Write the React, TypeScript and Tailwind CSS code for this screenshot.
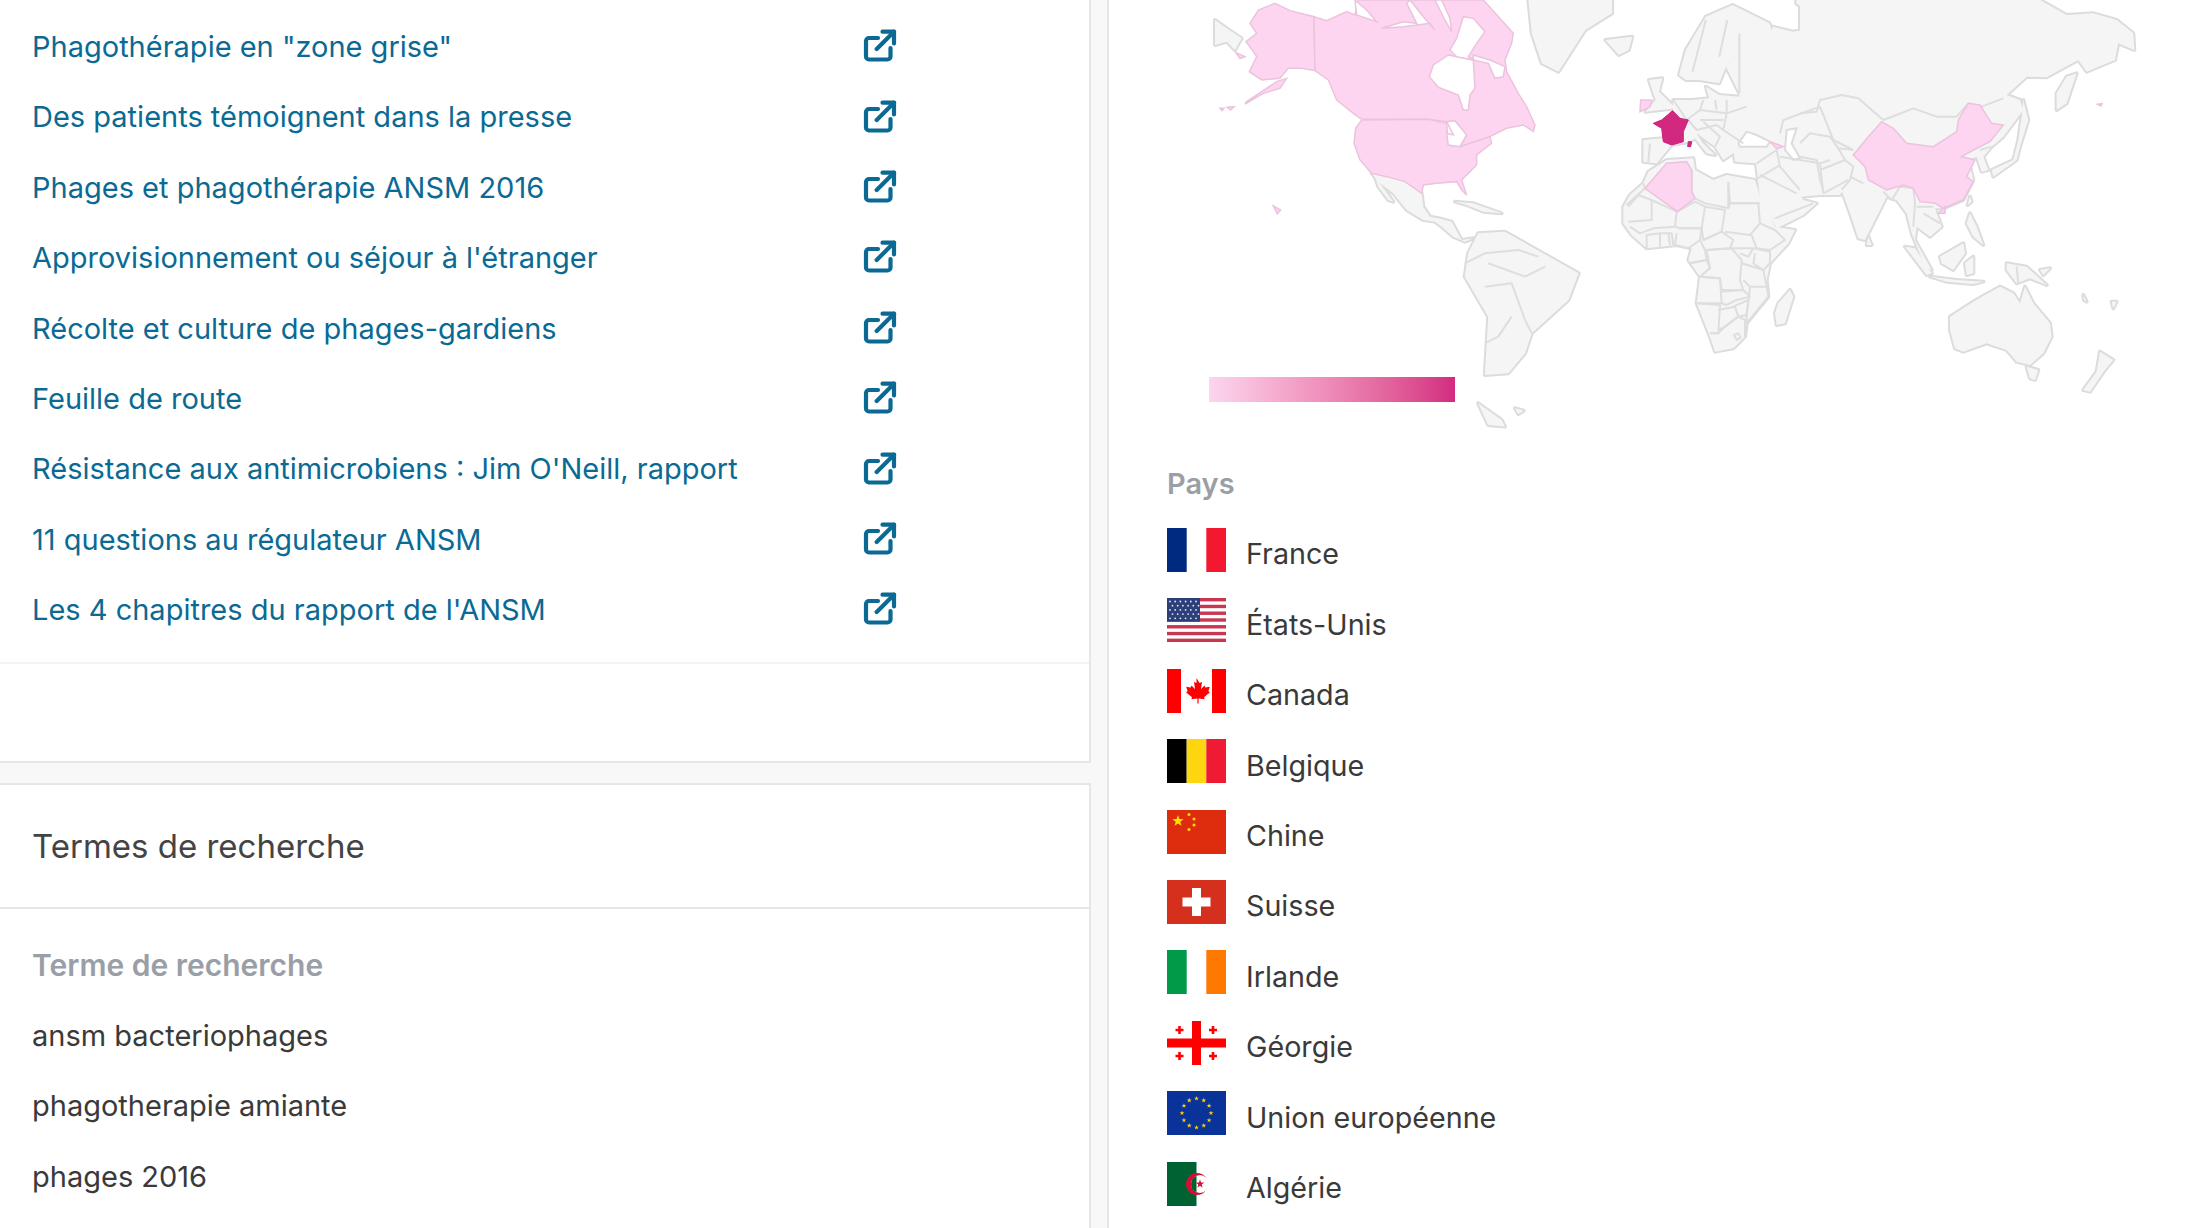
import React from 'react';

const links = [
  'Phagothérapie en "zone grise"',
  'Des patients témoignent dans la presse',
  'Phages et phagothérapie ANSM 2016',
  "Approvisionnement ou séjour à l'étranger",
  'Récolte et culture de phages-gardiens',
  'Feuille de route',
  "Résistance aux antimicrobiens : Jim O'Neill, rapport",
  '11 questions au régulateur ANSM',
  "Les 4 chapitres du rapport de l'ANSM",
];

const terms = ['ansm bacteriophages', 'phagotherapie amiante', 'phages 2016'];

const LinkIcon = () => (
  <svg viewBox="0 0 34 34" className="h-[34px] w-[34px] shrink-0" fill="none" stroke="#0b6a93" strokeWidth="4.2" strokeLinecap="round" strokeLinejoin="round">
    <path d="M15 9H6a3 3 0 0 0-3 3V27.5a3 3 0 0 0 3 3H24.5a3 3 0 0 0 3-3V19" />
    <path d="M19.5 2.7H31V14.5" />
    <path d="M31 2.7 13.7 20" />
  </svg>
);

// The map shapes were traced from crops at different scales, so each group has its own transform
const Z3 = 'translate(1150 0) scale(0.6697 0.3333)';
const Z9 = 'translate(1190 0) scale(0.3333)';
const Z10 = 'translate(1600 100) scale(0.3333)';
const Z11 = 'translate(1800 0) scale(0.3333)';

const land: [string, string][] = [
  [Z3, 'M565 0 L690 0 L690 40 L650 90 L610 215 L585 190 L570 100Z'],
  [Z3, 'M680 120 L720 110 L715 150 L700 165Z'],
  [Z3, 'M790 225 L800 150 L830 50 L870 15 L925 70 L930 105 L885 150 L860 200 L850 250 L820 240 L800 240Z'],
  [Z3, 'M860 200 L885 150 L880 100 L925 110 L930 80 L960 95 L1010 80 L965 10 L965 0 L1300 0 L1250 250 L1000 400 L880 400 L880 280Z'],
  [Z3, 'M800 320 L810 300 L835 295 L830 260 L850 285 L880 290 L890 250 L960 320 L960 330Z'],
  [Z3, 'M745 240 L765 235 L760 275 L785 325 L740 335 L755 300Z'],
  [Z3, 'M490 700 L530 695 L565 735 L640 820 L625 900 L570 1000 L560 1060 L535 1120 L500 1125 L505 950 L470 830 L475 760Z'],
  [Z3, 'M490 1210 L525 1260 L530 1280 L505 1275Z'],
  [Z3, 'M545 1225 L558 1232 L550 1242Z'],
  [Z9, 'M75 60 L110 85 L155 115 L135 150 L110 125 L75 135Z'],
  [Z9, 'M545 520 L590 530 L645 545 L695 580 L700 620 L720 650 L745 655 L785 665 L815 720 L850 715 L825 725 L790 710 L755 680 L735 665 L700 660 L650 630 L610 580 L570 550Z'],
  [Z9, 'M555 530 L610 605 L595 600 L565 560Z'],
  [Z9, 'M795 605 L850 610 L935 640 L880 635 L830 615Z'],
  [Z10, 'M70 320 L90 285 L130 250 L145 215 L200 180 L280 175 L285 210 L340 240 L380 225 L465 240 L480 290 L525 380 L585 390 L565 430 L510 490 L500 540 L505 590 L440 670 L435 710 L400 745 L345 755 L330 710 L290 610 L300 530 L265 480 L275 445 L230 435 L140 445 L95 405 L70 370Z'],
  [Z10, 'M570 570 L580 590 L555 670 L530 675 L525 640 L535 610Z'],
  [Z10, 'M130 120 L190 115 L218 32 L220 0 L445 0 L445 130 L400 160 L370 180 L345 140 L290 100 L305 125 L345 165 L320 160 L285 115 L270 125 L215 135 L170 190 L130 185Z'],
  [Z10, 'M400 150 L420 135 L445 0 L900 0 L900 270 L800 260 L745 250 L720 285 L660 285 L600 290 L590 270 L610 300 L650 310 L610 345 L530 385 L480 300 L473 230 L468 190 L405 185Z'],
  [Z11, 'M0 0 L720 0 L800 45 L880 40 L950 60 L1000 100 L1003 150 L955 130 L945 180 L860 215 L835 180 L770 215 L740 232 L680 230 L620 285 L660 300 L670 330 L610 410 L575 440 L550 470 L565 510 L545 515 L530 470 L505 480 L520 540 L490 600 L430 625 L405 625 L425 680 L390 710 L350 680 L345 720 L395 810 L375 800 L335 700 L320 640 L290 600 L260 590 L205 700 L195 720 L175 715 L150 640 L125 570 L60 560 L0 590Z'],
  [Z11, 'M450 950 L520 905 L555 885 L600 860 L640 880 L660 910 L675 860 L700 910 L750 970 L755 1010 L730 1060 L690 1095 L650 1085 L620 1050 L560 1030 L490 1055 L465 1045 L450 990Z'],
  [Z11, 'M680 1100 L715 1110 L705 1140 L690 1135Z'],
  [Z11, 'M900 1055 L940 1080 L915 1110 L870 1175 L850 1170 L890 1115Z'],
  [Z11, 'M670 300 L685 360 L660 440 L650 480 L580 530 L575 510 L640 480 L655 420 L665 350Z'],
  [Z11, 'M830 220 L800 310 L770 330 L770 280 L800 230Z'],
  [Z11, 'M510 590 L515 605 L503 615Z'],
  [Z11, 'M510 640 L530 680 L550 735 L520 710 L500 670Z'],
  [Z11, 'M420 770 L490 730 L495 760 L460 810 L425 790Z'],
  [Z11, 'M315 740 L345 745 L395 820 L380 825Z'],
  [Z11, 'M390 830 L470 840 L550 845 L520 852 L440 845Z'],
  [Z11, 'M495 790 L520 770 L520 820 L500 825Z'],
  [Z11, 'M620 790 L680 800 L740 855 L690 835 L650 850 L620 810Z'],
  [Z11, 'M720 810 L750 805 L730 825Z'],
  [Z11, 'M205 710 L215 735 L200 735Z'],
  [Z11, 'M850 885 L860 905 L852 900Z'],
  [Z11, 'M935 905 L950 905 L940 925Z'],
];

const seas: [string, string][] = [
  [Z10, 'M415 130 L440 95 L470 105 L510 125 L500 140 L420 140Z'],
  [Z10, 'M560 90 L590 85 L575 130 L600 175 L580 180 L555 150Z'],
];

const borders: [string, string][] = [
  [Z3, 'M830 60 L810 215'],
  [Z3, 'M862 60 L850 170'],
  [Z3, 'M880 100 L880 280'],
  [Z10, 'M130 250 L135 265 L80 315'],
  [Z10, 'M85 320 L115 285 L155 300 L155 360 L85 365'],
  [Z10, 'M155 300 L230 335 L225 380 L160 385 L120 400 L90 380'],
  [Z10, 'M232 335 L285 305 L315 320 L305 385 L240 385 L225 380'],
  [Z10, 'M275 210 L275 275 L285 295 L315 310 L385 325 L385 245'],
  [Z10, 'M385 250 L390 310 L480 310'],
  [Z10, 'M315 320 L375 330 L365 395 L310 420 L305 385'],
  [Z10, 'M385 325 L390 310 L475 310 L480 370 L450 405 L375 395'],
  [Z10, 'M480 370 L525 390 L555 420 L510 450 L470 445 L455 405'],
  [Z10, 'M240 385 L305 385 L300 420 L265 445 L225 435 L230 400'],
  [Z10, 'M140 445 L140 405 L180 400 L215 400 L220 435 M180 400 L180 440 M205 400 L210 435'],
  [Z10, 'M310 420 L365 395 L400 420 L390 445 L320 450'],
  [Z10, 'M320 450 L395 445 L425 480 L420 540 L430 570 L365 570 L360 535 L300 530 L330 505Z'],
  [Z10, 'M270 490 L320 480 L330 505 L300 530'],
  [Z10, 'M300 420 L315 450 L320 480 L270 490'],
  [Z10, 'M390 445 L460 445 L445 470 L420 460'],
  [Z10, 'M460 445 L510 455 L510 490 L490 510 L460 490 L465 460'],
  [Z10, 'M425 490 L490 510 L500 560 L450 560 L430 540'],
  [Z10, 'M300 530 L360 535 L365 610 L290 610'],
  [Z10, 'M365 575 L430 570 L450 590 L410 600 L380 615 L365 610'],
  [Z10, 'M500 560 L505 590 L440 670 L440 640 L445 610 L450 560'],
  [Z10, 'M290 610 L360 615 L355 700 L330 700'],
  [Z10, 'M355 630 L405 620 L415 650 L375 680 L355 690'],
  [Z10, 'M400 620 L445 600 L440 645 L415 650'],
  [Z10, 'M330 700 L355 700 L375 680 L415 650 L435 660 L435 710'],
  [Z10, 'M402 705 L415 700 L422 712 L410 720Z'],
  [Z10, 'M470 190 L530 150 L540 200 L600 270'],
  [Z10, 'M465 240 L540 195 M480 225 L590 280'],
  [Z10, 'M525 355 L640 310'],
  [Z10, 'M540 170 L660 190 L670 280'],
  [Z10, 'M660 190 L690 180 M670 280 L745 240'],
  [Z10, 'M540 100 L550 60 L660 20'],
  [Z10, 'M660 20 L700 120 L760 150'],
  [Z10, 'M750 230 L790 250'],
  [Z10, 'M220 0 L260 60 L300 30 L380 40 L440 20'],
  [Z10, 'M300 30 L310 0 M380 0 L380 40 L370 90 L430 130'],
  [Z10, 'M265 60 L290 90 L350 75 L370 90'],
  [Z10, 'M310 65 L360 110 L345 140'],
  [Z10, 'M300 60 L370 60 M345 0 L350 30'],
  [Z10, 'M150 130 L145 185'],
  [Z11, 'M0 340 L50 335 L60 300 L125 285 L175 295 L250 360 L290 345 L340 325 L410 350 L470 350 L505 310 L545 320 L610 295'],
  [Z11, 'M0 430 L30 400 L90 410 L115 445 L160 450'],
  [Z11, 'M0 470 L50 480 L60 540 L70 570'],
  [Z11, 'M60 510 L135 480 L160 500 L150 540 L125 570'],
  [Z11, 'M115 445 L135 480'],
  [Z11, 'M250 575 L275 600 L300 560 L340 565 L345 610 L340 680'],
  [Z11, 'M350 620 L400 620 M370 640 L420 670'],
  [Z11, 'M540 450 L575 440 M650 800 L655 850'],
  [Z3, 'M505 790 L560 830 L590 800 M500 860 L540 850 L560 960 M540 950 L520 1010 L500 1030 M560 960 L570 1000 M470 790 L500 760 L550 750 L580 770'],
];

const pink: [string, string][] = [
  [Z9, 'M180 70 L205 30 L255 10 L300 32 L372 50 L375 212 L335 205 L295 205 L270 235 L215 240 L178 215 L200 170 L190 155 L168 125 L200 100Z'],
  [Z9, 'M290 235 L270 265 L220 280 L165 312 L170 305 L215 275 L260 245Z'],
  [Z9, 'M372 50 L410 62 L470 35 L495 45 L505 0 L880 0 L970 100 L965 130 L945 180 L950 215 L985 280 L1010 320 L1035 375 L1030 395 L1000 375 L950 385 L900 410 L810 440 L830 405 L790 385 L770 365 L715 358 L515 358 L490 340 L440 300 L415 240 L375 212Z'],
  [Z9, 'M515 360 L715 358 L770 370 L775 435 L810 440 L900 410 L905 430 L860 465 L860 495 L815 540 L830 585 L815 570 L800 545 L740 550 L700 555 L695 580 L645 545 L590 530 L545 520 L510 480 L492 430 L497 385Z'],
  [Z9, 'M250 618 L272 630 L262 642Z'],
  [Z9, 'M138 158 L165 170 L150 176Z'],
  [Z9, 'M90 325 L102 325 L96 332Z'],
  [Z9, 'M112 322 L132 320 L122 330Z'],
  [Z10, 'M135 265 L200 190 L260 185 L275 210 L275 275 L285 295 L232 335Z'],
  [Z10, 'M510 125 L550 140 L530 146Z'],
  [Z10, 'M122 0 L155 0 L150 20 L120 35Z'],
  [Z11, 'M160 465 L205 410 L245 365 L280 385 L320 430 L400 440 L470 395 L475 360 L505 310 L540 315 L575 370 L610 375 L570 425 L520 450 L485 470 L525 480 L500 530 L520 545 L490 600 L430 625 L405 610 L360 605 L340 565 L310 555 L260 570 L205 540 L195 500Z'],
  [Z11, 'M415 640 L435 620 L435 640Z'],
  [Z11, 'M893 313 L906 311 L903 318Z'],
];

// Hudson Bay and the arctic channels, cut out of the Canada shape
const pinkSeas: [string, string][] = [
  [Z9, 'M718 230 L730 195 L775 165 L800 170 L850 180 L855 265 L840 285 L835 330 L820 330 L805 285 L745 262Z'],
  [Z9, 'M800 115 L820 50 L850 55 L885 95 L860 130 L835 170 L850 180 L800 170 L780 150Z'],
  [Z9, 'M850 165 L900 180 L945 200 L940 230 L915 235 L895 190 L850 180Z'],
  [Z9, 'M575 85 L640 65 L680 70 L650 10 L660 0 L680 25 L700 50 L735 90 L720 70 L640 80Z'],
  [Z9, 'M495 0 L530 30 L560 65 L500 45Z'],
  [Z9, 'M735 0 L755 0 L780 55 L785 95 L765 60Z'],
  [Z9, 'M770 365 L795 362 L830 405 L810 440 L775 435 L770 400 L790 405Z'],
];

const france: [string, string][] = [
  [Z10, 'M160 70 L185 60 L218 32 L240 55 L265 60 L250 95 L250 125 L215 135 L190 125 L185 85Z'],
  [Z10, 'M265 125 L275 125 L272 140 L263 140Z'],
];

const WorldMap = () => (
  <svg viewBox="1109 0 1091 440" className="block h-[440px] w-[1091px]" fill="none">
    {land.map(([t, d], i) => (
      <path key={i} d={d} transform={t} stroke="#dcdcdc" strokeWidth="4" strokeLinejoin="round" vectorEffect="non-scaling-stroke" />
    ))}
    {land.map(([t, d], i) => (
      <path key={i} d={d} transform={t} fill="#f5f5f5" />
    ))}
    {seas.map(([t, d], i) => (
      <path key={i} d={d} transform={t} fill="#ffffff" stroke="#dcdcdc" strokeWidth="2" vectorEffect="non-scaling-stroke" />
    ))}
    {borders.map(([t, d], i) => (
      <path key={i} d={d} transform={t} stroke="#dedede" strokeWidth="2" strokeLinejoin="round" vectorEffect="non-scaling-stroke" />
    ))}
    {pink.map(([t, d], i) => (
      <path key={i} d={d} transform={t} fill="#fdd5f0" stroke="#ecc3dc" strokeWidth="1.5" vectorEffect="non-scaling-stroke" />
    ))}
    {pinkSeas.map(([t, d], i) => (
      <path key={i} d={d} transform={t} fill="#ffffff" stroke="#ecc3dc" strokeWidth="1.5" vectorEffect="non-scaling-stroke" />
    ))}
    {france.map(([t, d], i) => (
      <path key={i} d={d} transform={t} fill="#d3287f" stroke="#cc2279" strokeWidth="1" vectorEffect="non-scaling-stroke" />
    ))}
  </svg>
);

const star = (cx: number, cy: number, r: number) => {
  const pts: string[] = [];
  for (let i = 0; i < 10; i++) {
    const a = (Math.PI / 5) * i - Math.PI / 2;
    const rad = i % 2 === 0 ? r : r * 0.4;
    pts.push(`${cx + rad * Math.cos(a)},${cy + rad * Math.sin(a)}`);
  }
  return pts.join(' ');
};

const Fr = () => (
  <>
    <rect width="19.7" height="44" fill="#002a7f" />
    <rect x="39.3" width="19.7" height="44" fill="#f31830" />
  </>
);

const Us = () => (
  <>
    <rect width="59" height="44" fill="#ffffff" />
    {[0, 2, 4, 6, 8, 10, 12].map((i) => (
      <rect key={i} y={i * 3.385} width="59" height="3.385" fill="#c8374f" />
    ))}
    <rect width="33" height="23.7" fill="#2d3f78" />
    {[0, 1, 2, 3, 4].map((r) =>
      [0, 1, 2, 3, 4, 5].map((c) => (
        <circle key={`${r}-${c}`} cx={3 + c * 5.2 + (r % 2) * 2.5} cy={3.5 + r * 4.2} r="0.9" fill="#e4e8f2" />
      ))
    )}
  </>
);

const Ca = () => (
  <>
    <rect width="14" height="44" fill="#ff0000" />
    <rect x="45" width="14" height="44" fill="#ff0000" />
    <path
      d="M29.5 9l3 5 2.5-1-1 7 3.5-3.5.8 2 4.5-.7-1.4 4.5 1.6 1-6 5 .6 2-6-.8v5h-1.2v-5l-6 .8.6-2-6-5 1.6-1-1.4-4.5 4.5.7.8-2 3.5 3.5-1-7 2.5 1z"
      fill="#ff0000"
    />
  </>
);

const Be = () => (
  <>
    <rect width="19.7" height="44" fill="#000000" />
    <rect x="19.7" width="19.7" height="44" fill="#fdd60f" />
    <rect x="39.3" width="19.7" height="44" fill="#ef1b35" />
  </>
);

const Cn = () => (
  <>
    <rect width="59" height="44" fill="#dd2c0e" />
    <polygon points={star(11, 11, 6)} fill="#ffde00" />
    <circle cx="22" cy="4.5" r="1.5" fill="#ffde00" />
    <circle cx="27" cy="9" r="1.5" fill="#ffde00" />
    <circle cx="27" cy="15" r="1.5" fill="#ffde00" />
    <circle cx="22" cy="19.5" r="1.5" fill="#ffde00" />
  </>
);

const Ch = () => (
  <>
    <rect width="59" height="44" fill="#d5301e" />
    <rect x="25" y="8" width="9" height="28" fill="#ffffff" />
    <rect x="15.5" y="17.5" width="28" height="9" fill="#ffffff" />
  </>
);

const Ie = () => (
  <>
    <rect width="19.7" height="44" fill="#009a49" />
    <rect x="39.3" width="19.7" height="44" fill="#ff7900" />
  </>
);

const Ge = () => (
  <>
    <rect x="25" width="9" height="44" fill="#ff0000" />
    <rect y="17.5" width="59" height="9" fill="#ff0000" />
    {[
      [12.5, 9],
      [46, 9],
      [12.5, 35],
      [46, 35],
    ].map(([x, y]) => (
      <path key={`${x}-${y}`} d={`M${x} ${y - 4}V${y + 4}M${x - 4} ${y}H${x + 4}`} stroke="#ff0000" strokeWidth="2.6" />
    ))}
  </>
);

const Eu = () => (
  <>
    <rect width="59" height="44" fill="#0a3399" />
    {Array.from({ length: 12 }).map((_, i) => {
      const a = (Math.PI / 6) * i;
      return <polygon key={i} points={star(29.5 + 14.5 * Math.cos(a), 22 + 14.5 * Math.sin(a), 2.6)} fill="#ffcc00" />;
    })}
  </>
);

const Dz = () => (
  <>
    <rect width="29.5" height="44" fill="#006233" />
    <circle cx="30" cy="22" r="11" fill="#d21034" />
    <circle cx="33" cy="22" r="9" fill="#ffffff" />
    <path d="M29.5 13.71A9 9 0 0 0 29.5 30.29Z" fill="#006233" />
    <polygon points={star(33, 22, 4.5)} fill="#d21034" />
  </>
);

const countries: [string, React.FC][] = [
  ['France', Fr],
  ['États-Unis', Us],
  ['Canada', Ca],
  ['Belgique', Be],
  ['Chine', Cn],
  ['Suisse', Ch],
  ['Irlande', Ie],
  ['Géorgie', Ge],
  ['Union européenne', Eu],
  ['Algérie', Dz],
];

const App: React.FC = () => {
  return (
    <div className="flex h-[1228px] w-[2200px] overflow-hidden bg-white font-['Inter',sans-serif] text-[29px]">
      {/* left column */}
      <div className="flex w-[1092px] flex-col bg-[#f8f8f8]">
        <section className="h-[763px] border-r-2 border-b-2 border-[#e6e6e6] bg-white pt-[11px]">
          {links.map((label) => (
            <div key={label} className="flex h-[70.4px] w-[897px] items-center justify-between pl-[32px]">
              <a href="#" className="pt-[1px] text-[#0b6a93]">{label}</a>
              <LinkIcon />
            </div>
          ))}
          <div className="mt-[17px] border-t-2 border-[#f3f3f3]" />
        </section>
        <section className="mt-[20px] flex-1 border-t-2 border-r-2 border-[#e6e6e6] bg-white">
          <h2 className="flex h-[124px] items-center border-b-2 border-[#e6e6e6] pt-[1px] pl-[32px] text-[33px] font-normal text-[#444444]">
            Termes de recherche
          </h2>
          <div className="pt-[21px]">
            <div className="flex h-[70.4px] items-center pl-[32px] text-[30px] font-semibold text-[#9a9ea6]">Terme de recherche</div>
            {terms.map((term) => (
              <div key={term} className="flex h-[70.4px] items-center pl-[32px] text-[#3a3a3a]">{term}</div>
            ))}
          </div>
        </section>
      </div>

      {/* right column */}
      <div className="flex-1 bg-[#f8f8f8] pl-[16px]">
        <div className="relative h-full border-l-2 border-[#e6e6e6] bg-white">
          <WorldMap />
          <div className="absolute top-[377px] left-[100px] h-[25px] w-[246px] bg-linear-to-r from-[#fcd6ee] to-[#d32a80]" />
          <div className="pt-[9px] pl-[58px]">
            <div className="-mb-[4.6px] flex h-[70.4px] items-center font-semibold text-[#9a9ea6]">Pays</div>
            {countries.map(([name, Flag]) => (
              <div key={name} className="flex h-[70.4px] items-center text-[28.7px] text-[#3a3a3a]">
                <svg viewBox="0 0 59 44" className="h-[44px] w-[59px] shrink-0">
                  <Flag />
                </svg>
                <span className="ml-[20px] pt-[8px]">{name}</span>
              </div>
            ))}
          </div>
        </div>
      </div>
    </div>
  );
};

export default App;
